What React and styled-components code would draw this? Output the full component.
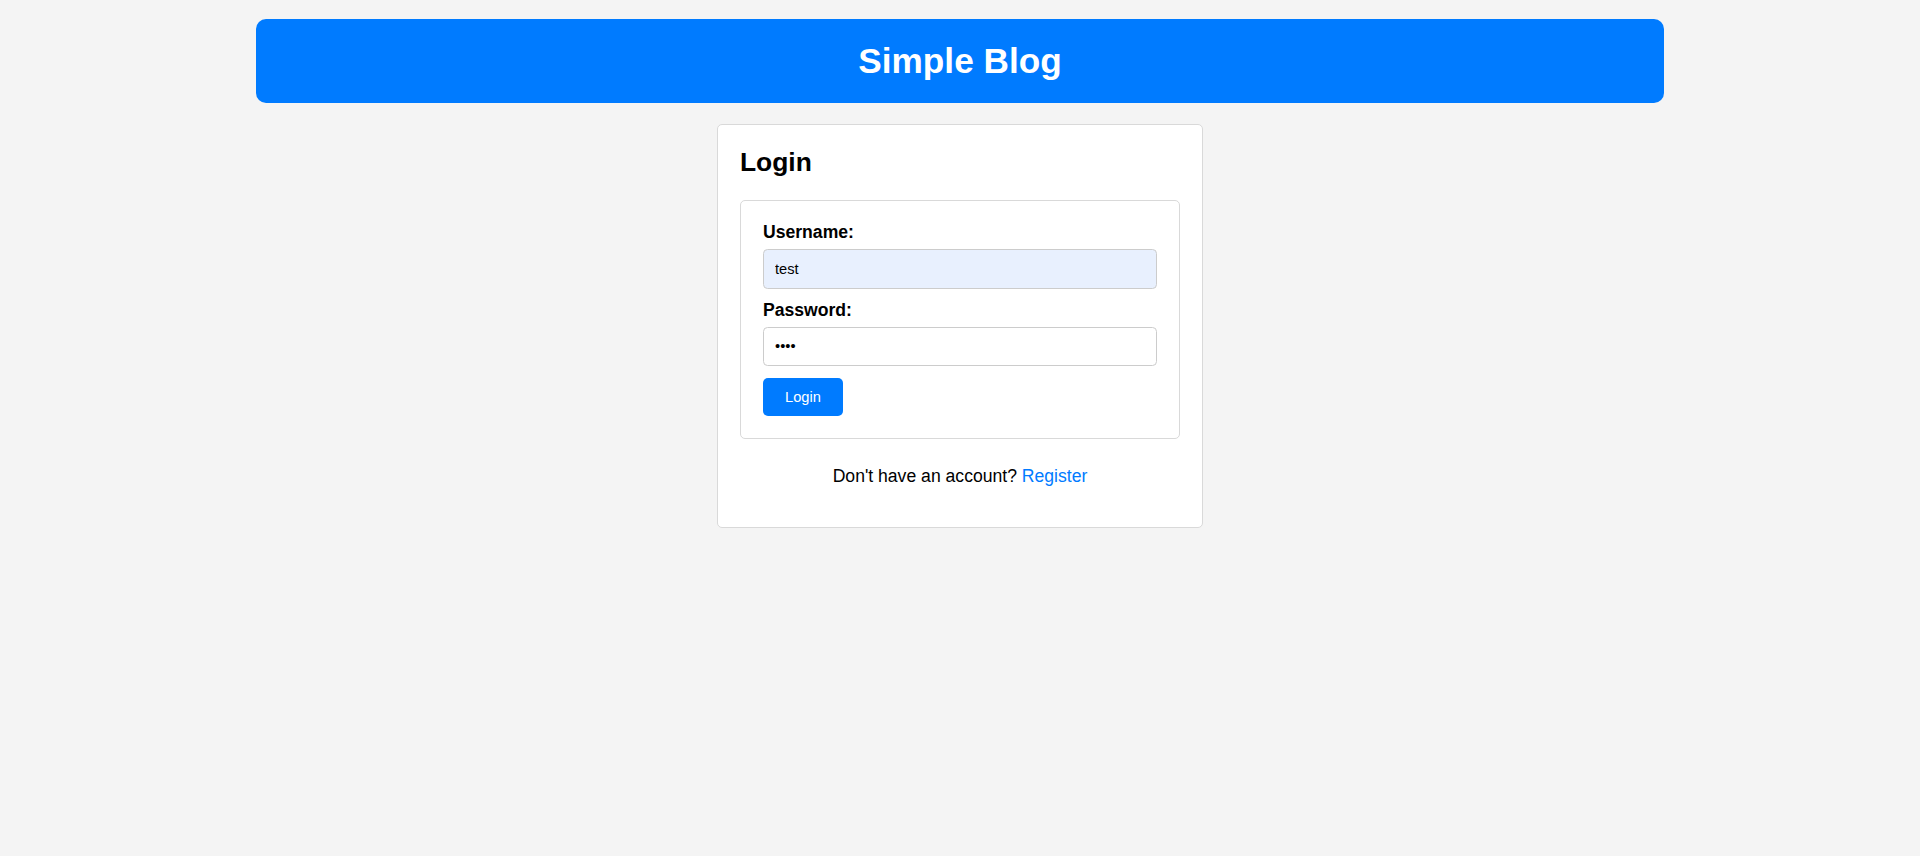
import React from "react";
import styled, { createGlobalStyle } from "styled-components";

const GlobalStyle = createGlobalStyle`
  html, body {
    margin: 0;
    padding: 0;
    background: #f4f4f4;
  }
  body {
    font-family: "Liberation Sans", Arial, sans-serif;
    color: #000;
  }
  * { box-sizing: border-box; }
`;

const Page = styled.div`
  display: flex;
  flex-direction: column;
  align-items: center;
  padding-top: 19px;
  min-height: 856px;
`;

const Header = styled.header`
  width: 1408px;
  background: #007bff;
  border-radius: 10px;
  padding: 22px;
  display: flex;
  justify-content: center;
`;

const SiteTitle = styled.h1`
  margin: 0;
  color: #fff;
  font-size: 35.2px;
  line-height: 40px;
  font-weight: 700;
`;

const Card = styled.main`
  width: 486px;
  margin-top: 21px;
  background: #fff;
  border: 1px solid #d9d9d9;
  border-radius: 5px;
  padding: 22px;
`;

const CardTitle = styled.h2`
  margin: 0 0 23px;
  font-size: 26.4px;
  line-height: 30.3px;
  font-weight: 700;
`;

const Form = styled.form`
  border: 1px solid #d9d9d9;
  border-radius: 5px;
  padding: 21px 22px 22px;
  display: flex;
  flex-direction: column;
  align-items: flex-start;
`;

const Label = styled.label`
  display: block;
  font-size: 17.6px;
  line-height: 20.2px;
  font-weight: 700;
  margin-bottom: 6.5px;
`;

const Input = styled.input`
  width: 100%;
  height: 39.5px;
  padding: 0 11px;
  margin-bottom: 11.5px;
  border: 1px solid #ccc;
  border-radius: 4.5px;
  font-family: "Liberation Sans", Arial, sans-serif;
  font-size: 14.67px;
  color: #000;
  background: ${(p) => (p.$autofilled ? "#e8f0fe" : "#fff")};
  outline: none;
`;

const Button = styled.button`
  margin-top: 0.5px;
  height: 38px;
  padding: 0 22px;
  border: none;
  border-radius: 5px;
  background: #007bff;
  color: #fff;
  font-family: "Liberation Sans", Arial, sans-serif;
  font-size: 14.67px;
  cursor: pointer;
`;

const Footer = styled.p`
  margin: 27px 0 18.6px;
  text-align: center;
  font-size: 17.6px;
  line-height: 20.2px;
`;

const Link = styled.a`
  color: #007bff;
  text-decoration: none;
`;

export default function App() {
  return (
    <>
      <GlobalStyle />
      <Page>
        <Header>
          <SiteTitle>Simple Blog</SiteTitle>
        </Header>
        <Card>
          <CardTitle>Login</CardTitle>
          <Form onSubmit={(e) => e.preventDefault()}>
            <Label htmlFor="username">Username:</Label>
            <Input id="username" type="text" defaultValue="test" $autofilled />
            <Label htmlFor="password">Password:</Label>
            <Input id="password" type="password" defaultValue="test" />
            <Button type="submit">Login</Button>
          </Form>
          <Footer>
            Don't have an account? <Link href="#">Register</Link>
          </Footer>
        </Card>
      </Page>
    </>
  );
}
